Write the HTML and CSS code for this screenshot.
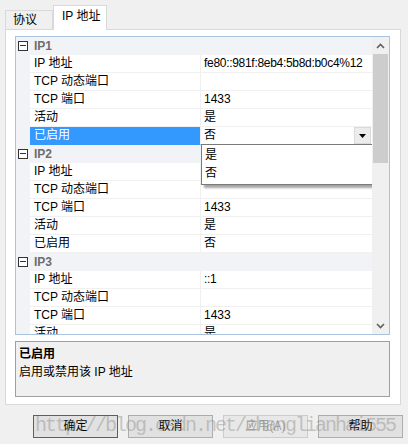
FILE: index.html
```html
<!DOCTYPE html>
<html lang="zh">
<head>
<meta charset="utf-8">
<link rel="stylesheet" href="styles.css">
</head>
<body>
<div class="dialog">
  <div class="tabs">
    <div class="tab">协议</div>
    <div class="tab active">IP 地址</div>
  </div>
  <div class="panel">
    <div class="grid">
      <div class="rows">
        <div class="cat"><span class="box"></span><span class="cat-name">IP1</span></div>
        <div class="row"><span class="gut"></span><span class="name">IP 地址</span><span class="val ip">fe80::981f:8eb4:5b8d:b0c4%12</span></div>
        <div class="row"><span class="gut"></span><span class="name">TCP 动态端口</span><span class="val"></span></div>
        <div class="row"><span class="gut"></span><span class="name">TCP 端口</span><span class="val">1433</span></div>
        <div class="row"><span class="gut"></span><span class="name">活动</span><span class="val">是</span></div>
        <div class="row"><span class="gut"></span><span class="name sel">已启用</span><span class="val edit">否<span class="ddbtn"><svg width="7" height="4" viewBox="0 0 7 4"><path d="M0 0h7L3.5 4z" fill="#000"/></svg></span>
          <div class="ddlist"><div class="dditem">是</div><div class="dditem">否</div></div></span></div>
        <div class="cat"><span class="box"></span><span class="cat-name">IP2</span></div>
        <div class="row"><span class="gut"></span><span class="name">IP 地址</span><span class="val"></span></div>
        <div class="row"><span class="gut"></span><span class="name">TCP 动态端口</span><span class="val"></span></div>
        <div class="row"><span class="gut"></span><span class="name">TCP 端口</span><span class="val">1433</span></div>
        <div class="row"><span class="gut"></span><span class="name">活动</span><span class="val">是</span></div>
        <div class="row"><span class="gut"></span><span class="name">已启用</span><span class="val">否</span></div>
        <div class="cat"><span class="box"></span><span class="cat-name">IP3</span></div>
        <div class="row"><span class="gut"></span><span class="name">IP 地址</span><span class="val ip">::1</span></div>
        <div class="row"><span class="gut"></span><span class="name">TCP 动态端口</span><span class="val"></span></div>
        <div class="row"><span class="gut"></span><span class="name">TCP 端口</span><span class="val">1433</span></div>
        <div class="row"><span class="gut"></span><span class="name">活动</span><span class="val">是</span></div>
      </div>
      <div class="scrollbar">
        <div class="arrow"><svg width="9" height="6" viewBox="0 0 9 6"><path d="M1 5L4.5 1.5L8 5" fill="none" stroke="#606060" stroke-width="1.6"/></svg></div>
        <div class="thumb"></div>
        <div class="track"></div>
        <div class="arrow"><svg width="9" height="6" viewBox="0 0 9 6"><path d="M1 1L4.5 4.5L8 1" fill="none" stroke="#606060" stroke-width="1.6"/></svg></div>
      </div>
    </div>
    <div class="desc">
      <div class="desc-title">已启用</div>
      <div class="desc-text">启用或禁用该 IP 地址</div>
    </div>
  </div>
  <div class="buttons">
    <div class="btn default">确定</div>
    <div class="btn">取消</div>
    <div class="btn disabled">应用(A)</div>
    <div class="btn">帮助</div>
  </div>
  <div class="watermark">http://blog.csdn.net/zhanglianhai555</div>
</div>
</body>
</html>
```
FILE: styles.css
```css
* { box-sizing: border-box; }
html, body { margin: 0; padding: 0; }
body {
  background: #f0f0f0;
  font-family: "Liberation Sans", "Noto Sans CJK SC", sans-serif;
  font-size: 12px;
  color: #000;
}
.dialog {
  position: relative;
  width: 408px;
  height: 444px;
  padding-top: 5px;
}
.tabs {
  display: flex;
  align-items: flex-end;
  padding-left: 5px;
  height: 24px;
  position: relative;
  z-index: 2;
}
.tab {
  height: 19px;
  width: 48px;
  border: 1px solid #d9d9d9;
  border-bottom: none;
  background: #f0f0f0;
  line-height: 18px;
  padding-left: 7px;
}
.tab.active {
  height: 25px;
  width: 54px;
  background: #fff;
  margin-bottom: -1px;
  line-height: 21px;
  padding-left: 8px;
}
.panel {
  margin: 0 7px 0 5px;
  height: 376px;
  border: 1px solid #d9d9d9;
  background: #fff;
  padding: 6px 10px 0 9px;
}
.grid {
  height: 299px;
  border: 1px solid #a8c3e0;
  display: flex;
  overflow: hidden;
  background: #fff;
}
.rows {
  flex: 1;
  overflow: hidden;
}
.cat, .row {
  display: flex;
  height: 18px;
  line-height: 17px;
}
.cat {
  background: #f2f3f6;
  align-items: center;
}
.box {
  width: 10px;
  height: 10px;
  border: 1px solid #333;
  margin: 0 6px 0 2px;
  position: relative;
  background: #fff;
}
.box::after {
  content: "";
  position: absolute;
  left: 1px;
  right: 1px;
  top: 3px;
  height: 1px;
  background: #333;
}
.cat-name {
  font-weight: bold;
  color: #6d6d6d;
}
.gut {
  width: 14px;
  background: #f2f3f6;
  flex: none;
}
.name {
  width: 171px;
  flex: none;
  padding-left: 4px;
  border-bottom: 1px solid #f0f0f0;
  border-right: 1px solid #f0f0f0;
  white-space: nowrap;
}
.name.sel {
  background: #3399ff;
  color: #fff;
  border-bottom-color: #3399ff;
}
.val {
  flex: 1;
  padding-left: 3px;
  border-bottom: 1px solid #f0f0f0;
  white-space: nowrap;
  position: relative;
}
.val.ip { letter-spacing: -0.3px; }
.val.edit { border-bottom-color: #fff; }
.ddbtn {
  position: absolute;
  right: 1px;
  top: 0;
  width: 17px;
  height: 17px;
  background: #ececec;
  border: 1px solid #dadada;
  display: flex;
  align-items: center;
  justify-content: center;
}
.ddlist {
  position: absolute;
  left: 0;
  top: 17px;
  width: 172px;
  height: 41px;
  background: #fff;
  border: 1px solid #7a7a7a;
  box-shadow: 3px 3px 2px rgba(0, 0, 0, 0.35);
  padding-top: 1px;
  z-index: 3;
}
.dditem {
  height: 18px;
  line-height: 18px;
  padding-left: 3px;
}
.scrollbar {
  width: 17px;
  flex: none;
  display: flex;
  flex-direction: column;
  background: #f0f0f0;
}
.arrow {
  height: 17px;
  display: flex;
  align-items: center;
  justify-content: center;
  flex: none;
}
.thumb {
  height: 109px;
  margin: 0 1px;
  background: #cdcdcd;
  flex: none;
}
.track { flex: 1; }
.desc {
  margin-top: 6px;
  height: 56px;
  border: 1px solid #a0a0a0;
  background: #f0f0f0;
  padding: 3px 0 0 3px;
}
.desc-title {
  font-weight: bold;
  line-height: 18px;
}
.desc-text {
  line-height: 18px;
}
.buttons {
  display: flex;
  gap: 10px;
  padding-left: 33px;
  margin-top: 10px;
}
.btn {
  width: 85px;
  height: 23px;
  border: 1px solid #adadad;
  background: #e1e1e1;
  text-align: center;
  line-height: 21px;
}
.btn.default {
  border: 1px solid #0078d7;
}
.btn.disabled {
  color: #a0a0a0;
  border-color: #cccccc;
  background: #e8e8e8;
}
.watermark {
  position: absolute;
  left: 35px;
  top: 414px;
  font-family: "Liberation Mono", monospace;
  font-size: 20px;
  letter-spacing: -2px;
  color: rgba(140, 140, 140, 0.45);
  line-height: 24px;
  white-space: nowrap;
  pointer-events: none;
}
```
